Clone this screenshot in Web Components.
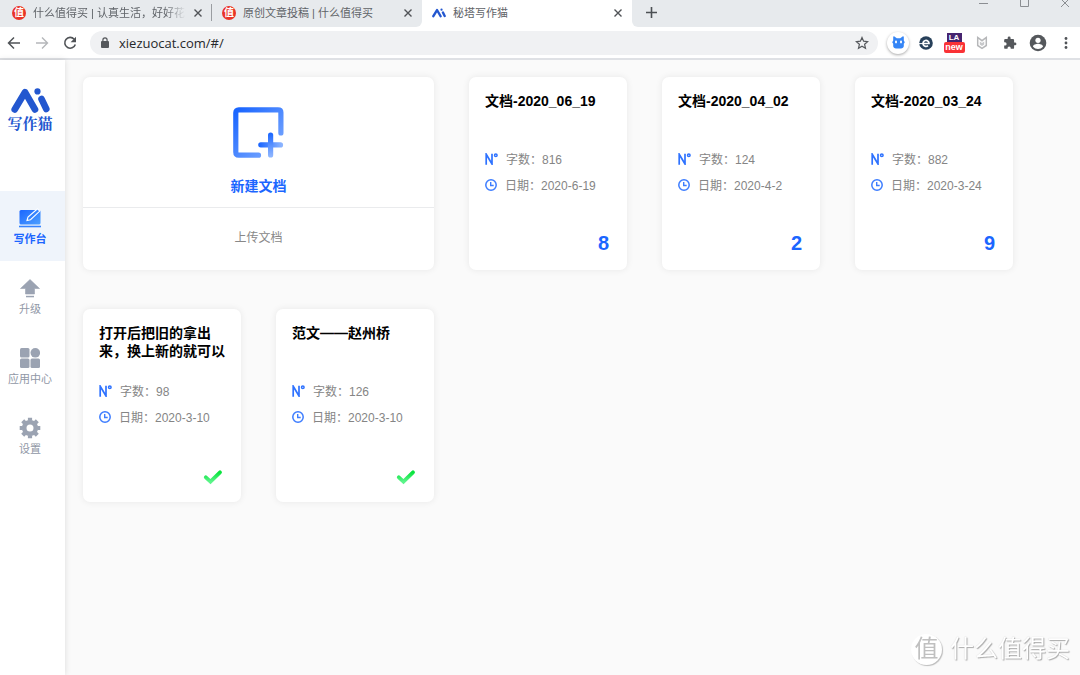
<!DOCTYPE html>
<html lang="zh-CN">
<head>
<meta charset="utf-8">
<meta name="viewport" content="width=device-width, initial-scale=1">
<title>秘塔写作猫</title>
<style>
  html, body { margin: 0; }
  body {
    min-height: 100vh;
    font-family: "Liberation Sans", "Noto Sans CJK SC", sans-serif;
    font-size: 12px;
    color: #888;
    background: #fafafa;
    --blue: #1b66ff;
  }
</style>
</head>
<body>
<app-window></app-window>

<script>
function define(name, html, setup) {
  const tpl = document.createElement('template');
  tpl.innerHTML = '<style>*{box-sizing:border-box}button{font:inherit;color:inherit;background:none;border:0;padding:0;margin:0;cursor:pointer}svg{display:block;flex:none}</style>' + html;
  customElements.define(name, class extends HTMLElement {
    constructor() {
      super();
      this.attachShadow({ mode: 'open' }).appendChild(tpl.content.cloneNode(true));
    }
    connectedCallback() { if (setup) setup(this, this.shadowRoot); }
  });
}

/* Browser tab: icon slot, title, close button */
define('browser-tab', `
<style>
  :host { display: flex; align-items: center; flex: 0 1 210px; min-width: 0; height: 27px; padding: 0 9px 2px 10px;
          font-size: 11px; color: #5f6368; position: relative; background: #e7eaed; }
  :host([active]) { background: #fff; }
  :host([before-active]) { border-bottom-right-radius: 6px; }
  :host([divided])::after { content: ""; position: absolute; right: 0; top: 4px; width: 1px; height: 17px; background: #9a9da1; }
  .title { flex: 1; margin: 0 7px; white-space: nowrap; overflow: hidden; line-height: 16px; }
  :host([long]) .title { -webkit-mask-image: linear-gradient(90deg, #000 86%, transparent); mask-image: linear-gradient(90deg, #000 86%, transparent); }
  ::slotted(*) { flex: none; }
</style>
<slot name="icon"></slot>
<span class="title"><slot></slot></span>
<button aria-label="关闭标签页"><svg width="10" height="10" viewBox="0 0 10 10"><path d="M1.500 1.500l7 7M8.500 1.500l-7 7" stroke="#505357" stroke-width="1.400"/></svg></button>
`);

define('smzdm-icon', `
<style>
  :host { display: flex; align-items: center; justify-content: center; width: 14px; height: 14px; border-radius: 50%;
          background: #ea3328; color: #fff; font-size: 10px; line-height: 14px; font-weight: bold; }
</style>值`);

define('ai-mark', `
<style>:host { display: block; width: 14px; height: 10px; } :host([large]) { width: 39px; height: 25px; } svg { width: 100%; height: 100%; }</style>
<svg viewBox="0 0 39 25"><g fill="none" stroke="#2357cf" stroke-width="6.600" stroke-linecap="round" stroke-linejoin="round"><path d="M3.700 21.500L14 4.200L24 21.500"/><path d="M30.500 11L35.300 21"/></g><circle cx="26.500" cy="3.400" r="3.100" fill="#2357cf"/></svg>
`);

define('browser-chrome', `
<style>
  :host { display: block; }
  .strip { display: flex; height: 27px; background: #fff; overflow: hidden; }
  .tabs { display: flex; flex: 0 1 632px; min-width: 0; border-left: 2px solid #e7eaed; }
  .rest { flex: 1; display: flex; background: #e7eaed; border-bottom-left-radius: 6px; }
  .add { width: 38px; height: 25px; display: grid; place-items: center; }
  .controls { margin-left: auto; display: flex; gap: 30px; padding-right: 9px; }
  .controls button { height: 8px; }
  .bar { display: flex; align-items: center; height: 33px; background: #fff; border-bottom: 2px solid #dfe1e5; }
  .nav { display: flex; gap: 12px; padding: 0 12px 0 6px; }
  .address { flex: 1; min-width: 0; height: 24px; border-radius: 12px; background: #f0f1f3; display: flex; align-items: center; padding: 0 9px 0 10px; gap: 9px; }
  .address input { flex: 1; min-width: 0; border: 0; padding: 0; outline: 0; background: none; color: #26282b;
    font: 13px/20px "Open Sans", "Noto Sans", sans-serif; }
  .tools { display: flex; align-items: center; padding: 0 0 0 6px; }
  .tools button { width: 28px; height: 30px; display: grid; place-items: center; }
  .cat { width: 22px; height: 22px; border-radius: 50%; background: #fff; box-shadow: 0 1px 3px rgba(0,0,0,.35); display: grid; place-items: center; }
  .tools .la { display: flex; flex-direction: column; align-items: center; padding-top: 5px; }
  .la b { width: 15px; height: 9px; background: #46246f; color: #fff; font-size: 8px; line-height: 9px; }
  .la i { width: 21px; height: 11px; border-radius: 2px; background: #fa3236; color: #fff; font: bold 9px/11px "Liberation Sans", sans-serif; }
</style>
<div class="strip">
  <div class="tabs">
    <browser-tab divided long><smzdm-icon slot="icon"></smzdm-icon>什么值得买 | 认真生活，好好花钱</browser-tab>
    <browser-tab before-active><smzdm-icon slot="icon"></smzdm-icon>原创文章投稿 | 什么值得买</browser-tab>
    <browser-tab active><ai-mark slot="icon"></ai-mark>秘塔写作猫</browser-tab>
  </div>
  <div class="rest">
    <button class="add" aria-label="新标签页"><svg width="11" height="11" viewBox="0 0 11 11"><path d="M5.500 0v11M0 5.500h11" stroke="#4c5054" stroke-width="1.600"/></svg></button>
    <div class="controls">
      <button aria-label="最小化"><svg width="10" height="8" viewBox="0 0 10 8"><path d="M0 3.500h9" stroke="#8b8e92"/></svg></button>
      <button aria-label="最大化"><svg width="10" height="8" viewBox="0 0 10 8"><path d="M1.500 0v6.500h8V0" fill="none" stroke="#8b8e92"/></svg></button>
      <button aria-label="关闭"><svg width="12" height="8" viewBox="0 0 12 8"><path d="M2 7l8-8M10 7l-8-8" stroke="#8b8e92"/></svg></button>
    </div>
  </div>
</div>
<div class="bar">
  <div class="nav">
    <button aria-label="后退"><svg width="16" height="16" viewBox="0 0 16 16" fill="none" stroke="#505357" stroke-width="1.500"><path d="M14 8H3M8 2.500L2.500 8L8 13.500"/></svg></button>
    <button aria-label="前进"><svg width="16" height="16" viewBox="0 0 16 16" fill="none" stroke="#b5b7ba" stroke-width="1.400"><path d="M2 8h11M8 2.500L13.500 8L8 13.500"/></svg></button>
    <button aria-label="重新加载"><svg width="16" height="16" viewBox="0 0 16 16"><path d="M12.200 4.200A5.400 5.400 0 1 0 13.300 9.500" fill="none" stroke="#505357" stroke-width="1.600"/><path d="M14 1.800v5.400H8.600z" fill="#505357"/></svg></button>
  </div>
  <div class="address">
    <svg width="10" height="12" viewBox="0 0 10 12"><rect x="1" y="4" width="8" height="7" rx="1" fill="#55585c"/><path d="M2.900 4.500V3a2.100 2.100 0 0 1 4.200 0v1.500" fill="none" stroke="#55585c" stroke-width="1.200"/></svg>
    <input type="text" aria-label="地址" value="xiezuocat.com/#/">
    <button aria-label="收藏"><svg width="14" height="14" viewBox="0 0 14 14"><path d="M7 1.500l1.600 3.700 4 .4-3 2.700.9 4L7 10.200 3.500 12.300l.9-4-3-2.700 4-.4z" fill="none" stroke="#55585c" stroke-width="1.200"/></svg></button>
  </div>
  <div class="tools">
    <button aria-label="写作猫"><span class="cat"><svg width="13" height="13" viewBox="0 0 13 13"><path d="M1.200 1c0-.7.600-1 1.200-.6L4.800 2.200h3.400L10.600.4c.6-.4 1.200-.1 1.200.6v3.600l1 1.700-1 1.500v2.300c0 1.500-1.300 2.400-2.800 2.400H4c-1.500 0-2.800-.9-2.800-2.400V7.800l-1-1.500 1-1.700z" fill="#3585f6"/><ellipse cx="4" cy="6" rx="1" ry="1.400" fill="#fff"/><ellipse cx="9" cy="6" rx="1" ry="1.400" fill="#fff"/></svg></span></button>
    <button aria-label="扩展"><svg width="14" height="14" viewBox="0 0 14 14"><circle cx="7" cy="7" r="6.800" fill="#27405a"/><path d="M4 7.500h6a3 3 0 1 0-1 2.200" fill="none" stroke="#fff" stroke-width="1.700"/><path d="M0 7.600h4" stroke="#fff"/></svg></button>
    <button class="la" aria-label="LA new"><b>LA</b><i>new</i></button>
    <button aria-label="安全"><svg width="12" height="14" viewBox="0 0 12 14"><path d="M1.700 1.500v8L6 12.300l4.300-2.800v-8L6 4.700z" fill="none" stroke="#b6b7b9" stroke-width="1.500"/><path d="M3.800 5.500v3L6 10l2.200-1.500v-3L6 7z" fill="#c7c8ca"/></svg></button>
    <button aria-label="扩展程序"><svg width="14" height="14" viewBox="0 0 24 24"><path fill="#55585c" d="M20.500 11H19V7a2 2 0 0 0-2-2h-4V3.500a2.500 2.500 0 0 0-5 0V5H4a2 2 0 0 0-2 2v3.800h1.500a2.700 2.700 0 0 1 0 5.400H2V20a2 2 0 0 0 2 2h3.800v-1.500a2.700 2.700 0 0 1 5.400 0V22H17a2 2 0 0 0 2-2v-4h1.500a2.500 2.500 0 0 0 0-5z"/></svg></button>
    <button aria-label="用户"><svg width="18" height="18" viewBox="0 0 18 18"><circle cx="9" cy="9" r="8.300" fill="#55585c"/><circle cx="9" cy="6.300" r="2.600" fill="#fff"/><path d="M4 12.700c0-2 3.300-2.900 5-2.900s5 .9 5 2.900A6.500 6.500 0 0 1 9 15a6.500 6.500 0 0 1-5-2.300z" fill="#fff"/></svg></button>
    <button aria-label="菜单"><svg width="4" height="14" viewBox="0 0 4 14" fill="#505357"><circle cx="2" cy="2.500" r="1.400"/><circle cx="2" cy="7" r="1.400"/><circle cx="2" cy="11.500" r="1.400"/></svg></button>
  </div>
</div>
`);

define('nav-item', `
<style>
  :host { display: block; }
  a { display: flex; flex-direction: column; align-items: center; height: 70px; padding: 16px 5px 0 0; gap: 2px; text-decoration: none;
      font-size: 11px; line-height: 16px; color: #9097a6; white-space: nowrap; }
  :host([active]) a { background: #eff4fb; color: var(--blue); font-weight: bold; }
  .icon { height: 22px; display: grid; place-items: center; }
</style>
<a href="#/"><span class="icon"><slot name="icon"></slot></span><span><slot></slot></span></a>
`);

define('side-bar', `
<style>
  :host { display: block; flex: none; width: 65px; background: #fff; box-shadow: 0 0 6px rgba(0,0,0,.13); }
  .brand { display: flex; flex-direction: column; align-items: center; height: 131px; padding: 28px 5px 0 0; color: #2357cf;
    font: bold 15px/20px "Noto Serif CJK SC", "Noto Sans CJK SC", serif; }
</style>
<div class="brand"><ai-mark large></ai-mark><span>写作猫</span></div>
<nav>
  <nav-item active><svg slot="icon" width="24" height="20" viewBox="0 0 24 20"><defs><linearGradient id="g" x2="1" y2="1"><stop stop-color="#1b66ff"/><stop offset="1" stop-color="#4da0ff"/></linearGradient></defs><rect x="1.500" y="2" width="21" height="14.500" rx="1.500" fill="url(#g)"/><path d="M1 18.500h22" stroke="#3483ff" stroke-width="1.600"/><path d="M9 12.500l1-3.500L19.500.8l2.300 2.300-9.300 8.600z" fill="#3483ff" stroke="#fff" stroke-width="1.100"/></svg>写作台</nav-item>
  <nav-item><svg slot="icon" width="20" height="19" viewBox="0 0 20 19" fill="#9ba3b2"><path d="M10 .5l9.500 9H14.500V15h-9V9.500H.5z" stroke="#9ba3b2" stroke-width=".600" stroke-linejoin="round"/><path d="M6 16.800h8v1.500H6z"/></svg>升级</nav-item>
  <nav-item><svg slot="icon" width="20" height="20" viewBox="0 0 20 20" fill="#9ba3b2"><rect width="9.500" height="9.500" rx="1.500"/><circle cx="15.300" cy="4.800" r="4.800"/><rect y="10.500" width="9.500" height="9.500" rx="1.500"/><rect x="10.500" y="10.500" width="9.500" height="9.500" rx="1.500"/></svg>应用中心</nav-item>
  <nav-item><svg slot="icon" width="22" height="22" viewBox="0 0 22 22"><g fill="none" stroke="#9ba3b2"><circle cx="11" cy="11" r="5.800" stroke-width="4.600"/><path d="M11 .7v3M11 18.300v3M.7 11h3M18.300 11h3M3.700 3.700l2.200 2.200M16.100 16.100l2.200 2.200M3.700 18.300l2.200-2.200M16.100 5.900l2.200-2.200" stroke-width="4.200"/></g></svg>设置</nav-item>
</nav>
`);

define('new-card', `
<style>
  :host { display: flex; flex-direction: column; background: #fff; border-radius: 7px; box-shadow: 0 0 7px rgba(0,0,0,.08); }
  .new { display: flex; flex-direction: column; align-items: center; gap: 18px; padding: 30px 0 11px; color: var(--blue); font-size: 14px; line-height: 20px; font-weight: bold; border-bottom: 1px solid #eaebed; }
  .upload { flex: 1; padding-bottom: 6px; font-size: 12px; }
</style>
<button class="new">
  <svg width="51" height="51" viewBox="0 0 51 51" fill="none" stroke-width="5.200" stroke-linecap="round" stroke-linejoin="round"><defs>
    <linearGradient id="a" gradientUnits="userSpaceOnUse" x1="4" y1="4" x2="42" y2="42"><stop stop-color="#1b66ff"/><stop offset="1" stop-color="#72a3ff"/></linearGradient>
    <linearGradient id="h" gradientUnits="userSpaceOnUse" x1="26" y1="0" x2="49" y2="0"><stop stop-color="#1b66ff"/><stop offset="1" stop-color="#8db5ff"/></linearGradient>
    <linearGradient id="v" gradientUnits="userSpaceOnUse" x1="0" y1="26" x2="0" y2="49"><stop stop-color="#1b66ff"/><stop offset="1" stop-color="#8db5ff"/></linearGradient></defs>
    <path d="M47.900 26V5.600Q47.900 2.800 45 2.800H5.800Q2.800 2.800 2.800 5.800V45Q2.800 48.200 5.800 48.200H25.500" stroke="url(#a)"/>
    <path d="M27.800 37.800H47.500V38" stroke="url(#h)"/><path d="M37.600 28V48" stroke="url(#v)"/></svg>
  新建文档
</button>
<button class="upload">上传文档</button>
`);

define('doc-card', `
<style>
  :host { display: block; background: #fff; border-radius: 7px; box-shadow: 0 0 7px rgba(0,0,0,.08); }
  article { display: flex; flex-direction: column; height: 100%; padding: 15px 15px 17px 16px; }
  h2 { margin: 0 0 18px; min-height: 36px; font-size: 14px; line-height: 18px; color: #000; }
  .row { display: flex; align-items: center; gap: 8px; height: 26px; color: #858585; white-space: nowrap; }
  .row > span { padding-bottom: 2px; }
  footer { margin-top: auto; display: flex; justify-content: flex-end; align-items: flex-end; height: 20px; padding-right: 3px; color: var(--blue); font-size: 20px; line-height: 20px; font-weight: bold; }
</style>
<article>
  <h2><slot></slot></h2>
  <div class="row"><svg width="13" height="12" viewBox="0 0 13 12" fill="none" stroke="#2e72ff"><path d="M1.200 11.800V1.200L7 11V.8" stroke-width="1.700"/><circle cx="10.800" cy="2.200" r="1.300" stroke-width="1.500"/></svg><span>字数：<span class="count"></span></span></div>
  <div class="row"><svg width="12" height="12" viewBox="0 0 12 12" fill="none" stroke="#3d7dff"><circle cx="6" cy="6" r="5.200" stroke-width="1.500"/><path d="M5.700 3v3.500h3" stroke-width="1.400"/></svg><span>日期：<time></time></span></div>
  <footer></footer>
</article>
`, (el, root) => {
  root.querySelector('.count').textContent = el.getAttribute('words');
  root.querySelector('time').textContent = el.getAttribute('date');
  const issues = el.getAttribute('issues');
  const foot = root.querySelector('footer');
  if (issues) foot.textContent = issues;
  else foot.innerHTML = '<svg width="20" height="16" viewBox="0 0 20 16" role="img" aria-label="完成"><defs><linearGradient id="k" x1="0" y1="0" x2="0" y2="1"><stop stop-color="#08e33c"/><stop offset="1" stop-color="#5df58b"/></linearGradient></defs><path d="M2.800 8.300L7.500 12.700L17 3.300" fill="none" stroke="url(#k)" stroke-width="3.800" stroke-linecap="round"/></svg>';
});

define('water-mark', `
<style>
  :host { position: fixed; right: 10px; bottom: 10px; display: flex; align-items: center; gap: 8px; pointer-events: none; color: #fff;
    font-size: 24px; line-height: 32px; text-shadow: 1px 1px 1px #aaa, 0 0 1px #ccc; }
  .logo { width: 31px; height: 31px; border-radius: 50%; background: #fff; box-shadow: 1px 1px 1px #bbb; color: #c0c0c0; text-shadow: none;
    line-height: 30px; text-align: center; }
</style>
<span class="logo">值</span><span>什么值得买</span>
`);

define('app-window', `
<style>
  :host { display: flex; flex-direction: column; min-height: 100vh; }
  .body { flex: 1; display: flex; }
  main { flex: 1; display: grid; grid-template-columns: repeat(auto-fill, 158px); grid-auto-rows: 193px; gap: 39px 35px; align-content: start; padding: 17px; padding-left: 18px; }
  new-card { grid-column: span 2; }
</style>
<browser-chrome></browser-chrome>
<div class="body">
  <side-bar></side-bar>
  <main>
    <new-card></new-card>
    <doc-card words="816" date="2020-6-19" issues="8">文档-2020_06_19</doc-card>
    <doc-card words="124" date="2020-4-2" issues="2">文档-2020_04_02</doc-card>
    <doc-card words="882" date="2020-3-24" issues="9">文档-2020_03_24</doc-card>
    <doc-card words="98" date="2020-3-10">打开后把旧的拿出来，换上新的就可以</doc-card>
    <doc-card words="126" date="2020-3-10">范文——赵州桥</doc-card>
  </main>
</div>
<water-mark></water-mark>
`);
</script>
</body>
</html>
